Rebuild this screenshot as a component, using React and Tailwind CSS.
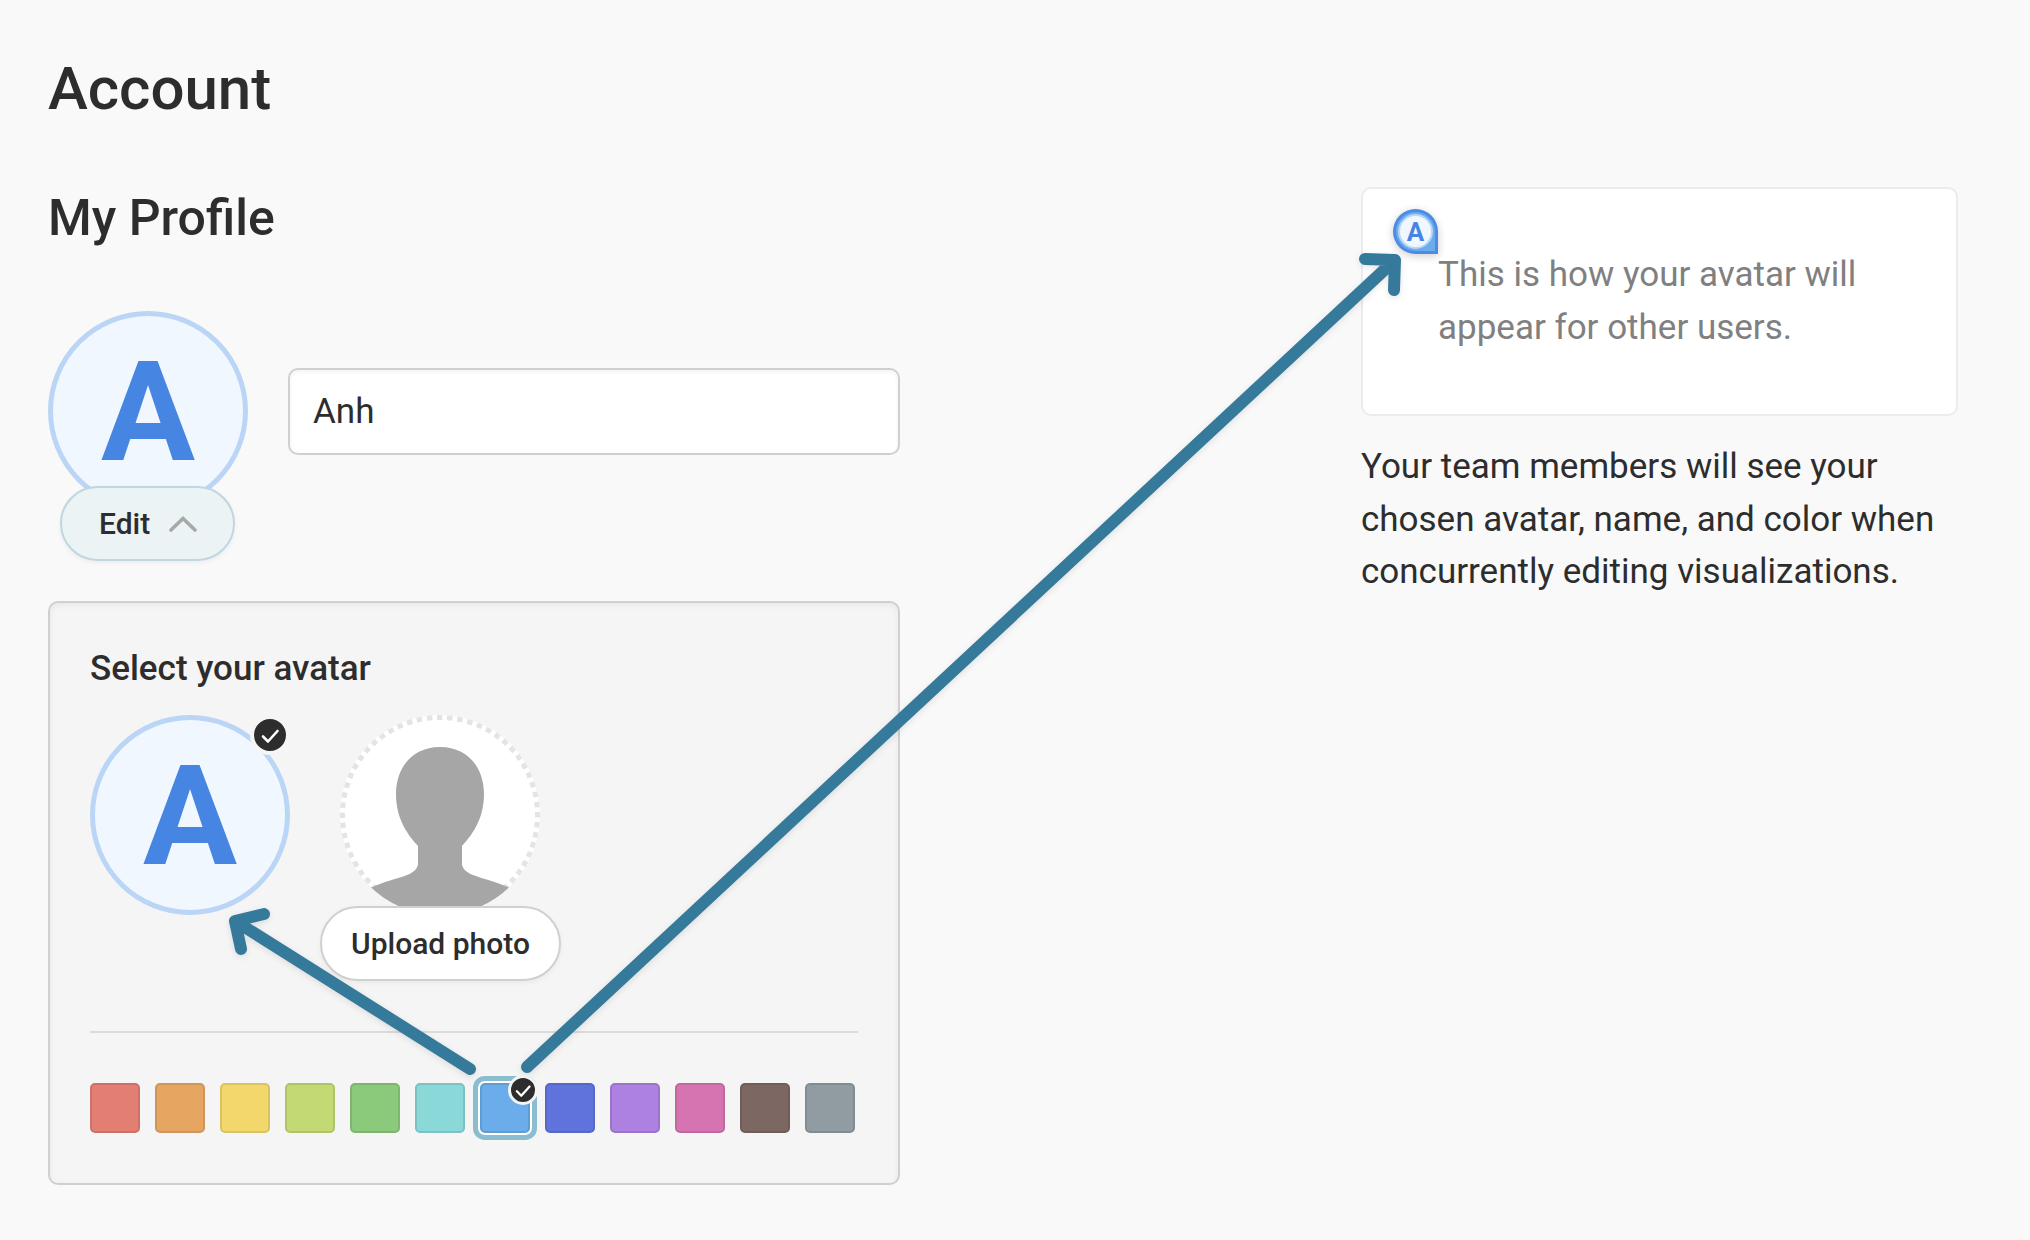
import React, { useState } from "react";

const COLORS = [
  { name: "Red", fill: "bg-[#e37e73] border-[#cc7168]" },
  { name: "Orange", fill: "bg-[#e7a562] border-[#d09558]" },
  { name: "Yellow", fill: "bg-[#f2d76c] border-[#dac261]" },
  { name: "Lime", fill: "bg-[#c3d973] border-[#b0c368]" },
  { name: "Green", fill: "bg-[#8cca7b] border-[#7eb66f]" },
  { name: "Teal", fill: "bg-[#8ad8d8] border-[#7cc2c2]" },
  { name: "Blue", fill: "bg-[#6badeb] border-[#609cd4]" },
  { name: "Indigo", fill: "bg-[#6072dc] border-[#5667c6]" },
  { name: "Purple", fill: "bg-[#ac81e0] border-[#9b74ca]" },
  { name: "Pink", fill: "bg-[#d674b1] border-[#c1689f]" },
  { name: "Brown", fill: "bg-[#7d6762] border-[#705d58]" },
  { name: "Gray", fill: "bg-[#919ca2] border-[#828c92]" },
];

function Check({ className }) {
  return (
    <svg viewBox="0 0 32 32" className={className} aria-hidden="true">
      <path d="M9 17.5 14 22.5 23.5 12" fill="none" stroke="#fff" strokeWidth="2.6" strokeLinecap="round" strokeLinejoin="round" />
    </svg>
  );
}

function LetterAvatar() {
  return (
    <span className="flex size-[200px] items-center justify-center rounded-full border-5 border-[#bbd5f6] bg-[#f0f7fe] pt-0.5 text-[140px] leading-none font-bold text-[#4685e2]">
      A
    </span>
  );
}

function PhotoPlaceholder() {
  return (
    <svg viewBox="0 0 200 200" className="size-[200px]" aria-hidden="true">
      <clipPath id="round">
        <circle cx="100" cy="100" r="100" />
      </clipPath>
      <circle cx="100" cy="100" r="100" fill="#fff" />
      <circle cx="100" cy="100" r="97.5" fill="none" stroke="#e4e4e4" strokeWidth="5" pathLength="600" strokeDasharray="5.4 4.6" strokeDashoffset="3" />
      <path
        clipPath="url(#round)"
        fill="#a6a6a6"
        d="M100 32C72 32 56 53 56 79C56 102 66 118 78 131V149C78 154 72 158 67 160C57 164 45 166 28 174V200H172V174C155 166 143 164 133 160C128 158 122 154 122 149V131C134 118 144 102 144 79C144 53 128 32 100 32Z"
      />
    </svg>
  );
}

export default function App() {
  const [name, setName] = useState("Anh");
  const [color, setColor] = useState("Blue");

  return (
    <main className="relative min-h-screen bg-[#f9f9f9] pt-[53px] pr-[72px] pb-[55px] pl-12 font-[Roboto,sans-serif] text-[#2d2d2d]">
      <h1 className="text-[60px] leading-[72px] font-medium">Account</h1>

      <div className="mt-[62px] flex items-start justify-between gap-12">
        <section className="w-full max-w-[852px]">
          <h2 className="text-[50px] leading-[62px] font-medium">My Profile</h2>

          <div className="mt-[62px] flex items-center gap-10">
            <LetterAvatar />
            <input
              type="text"
              aria-label="Name"
              value={name}
              onChange={(e) => setName(e.target.value)}
              className="h-[87px] min-w-0 flex-1 rounded-[10px] border-2 border-[#d0d0d0] bg-white px-[23px] text-[35px] shadow-[inset_0_2px_4px_rgba(0,0,0,0.05)] outline-none"
            />
          </div>
          <button
            type="button"
            aria-expanded="true"
            className="relative -mt-[25px] ml-3 flex h-[75px] w-[175px] items-center gap-[18px] rounded-full border-2 border-[#bfd7e0] bg-[#ebf3f5] pl-[37px] text-[30px] font-medium shadow-[0_2px_5px_rgba(0,0,0,0.05)]"
          >
            Edit
            <svg viewBox="0 0 30 18" className="h-[18px] w-[30px]" aria-hidden="true">
              <path d="M3 15 15 3.5 27 15" fill="none" stroke="#a8a8a8" strokeWidth="3.6" strokeLinecap="round" strokeLinejoin="miter" />
            </svg>
          </button>

          <div className="mt-10 rounded-[10px] border-2 border-[#d0d0d0] bg-[#f5f5f5] px-10 pt-[41px] pb-[50px] shadow-[inset_0_2px_6px_rgba(0,0,0,0.06)]">
            <h3 className="text-[35px] leading-[50px] font-medium">Select your avatar</h3>
            <div className="mt-[21px] flex items-start gap-[30px]">
              <button type="button" aria-pressed="true" aria-label="Letter avatar" className="relative">
                <LetterAvatar />
                <span className="absolute top-0 right-0 flex size-10 items-center justify-center rounded-full border-4 border-[#f5f5f5] bg-[#2d2d2d]">
                  <Check className="size-8" />
                </span>
              </button>
              <div className="flex flex-col items-center">
                <PhotoPlaceholder />
                <button
                  type="button"
                  className="relative -mt-[9px] h-[75px] rounded-full border-2 border-[#d0d0d0] bg-white px-[29px] text-[30px] font-medium shadow-[0_2px_5px_rgba(0,0,0,0.05)]"
                >
                  Upload photo
                </button>
              </div>
            </div>

            <hr className="mt-[50px] border-t-2 border-[#dbdbdb]" />

            <div role="radiogroup" aria-label="Color" className="mt-[50px] flex flex-wrap gap-[15px]">
              {COLORS.map((c) => (
                <label key={c.name} className="relative flex size-[50px]">
                  <input
                    type="radio"
                    name="color"
                    aria-label={c.name}
                    checked={color === c.name}
                    onChange={() => setColor(c.name)}
                    className={`size-full appearance-none rounded-[5px] border-2 checked:shadow-[0_0_0_2px_#fff,0_0_0_7px_#8bbdd1] ${c.fill}`}
                  />
                  {color === c.name && (
                    <span className="absolute -top-2 -right-2 flex size-[30px] items-center justify-center rounded-full border-3 border-[#f5f5f5] bg-[#2d2d2d]">
                      <Check className="size-7 shrink-0" />
                    </span>
                  )}
                </label>
              ))}
            </div>
          </div>
        </section>

        <aside className="w-[597px] shrink-0 text-[35px] leading-normal">
          <div className="relative rounded-[10px] border-2 border-[#ececec] bg-white py-[60px] pr-10 pl-[75px] text-[#808080]">
            <span className="absolute top-5 left-[30px] flex size-[45px] items-center justify-center rounded-full rounded-br-[5px] border-3 border-[#4a8ce6] bg-[#6badeb] shadow-[0_2px_8px_rgba(0,0,0,0.2)]">
              <span className="flex size-[35px] shrink-0 items-center justify-center rounded-full border-2 border-[#bbd5f6] bg-[#f0f7fe] text-[26px] leading-none font-bold text-[#4685e2]">
                A
              </span>
            </span>
            <p>This is how your avatar will appear for other users.</p>
          </div>
          <p className="mt-[25px]">Your team members will see your chosen avatar, name, and color when concurrently editing visualizations.</p>
        </aside>
      </div>

      <svg className="pointer-events-none absolute inset-0 size-full overflow-visible drop-shadow-[0_2px_3px_rgba(0,0,0,0.1)]" aria-hidden="true">
        <g fill="none" stroke="#357a9b" strokeWidth="12" strokeLinecap="round" strokeLinejoin="round">
          <path d="M470 1069 235 921M264 914 235 921 241 949" />
          <path d="M527 1067 1395 260M1365 259 1395 260 1394 290" />
        </g>
      </svg>
    </main>
  );
}
